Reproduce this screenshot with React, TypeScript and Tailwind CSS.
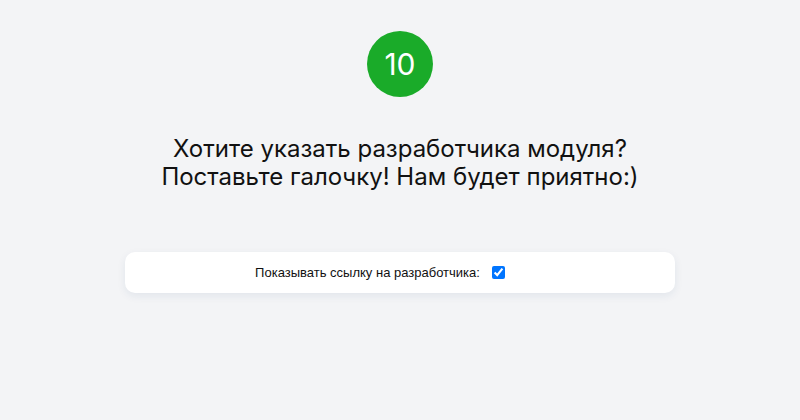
export default function App() {
  return (
    <div className="min-h-[420px] w-full bg-[#f3f4f6] flex flex-col items-center pt-[31px]" style={{ fontFamily: "Inter, sans-serif" }}>
      <div className="w-[66px] h-[66px] rounded-full bg-[#1aab29] flex items-center justify-center text-white text-[30px] leading-none">
        10
      </div>
      <h1 className="mt-[38px] text-center text-[24px] leading-[28px] text-[#111] font-normal">
        Хотите указать разработчика модуля?
        <br />
        Поставьте галочку! Нам будет приятно:)
      </h1>
      <div className="mt-[61px] w-[550px] h-[41px] bg-white rounded-[10px] shadow-[0_3px_8px_rgba(30,60,120,0.08)] flex items-center justify-center gap-[12px] pr-[40px]">
        <span className="text-[13px] text-[#111]" style={{ fontFamily: '"Liberation Sans", Arial, sans-serif' }}>
          Показывать ссылку на разработчика:
        </span>
        <input type="checkbox" defaultChecked className="w-[13px] h-[13px] m-0 accent-[#0075ff]" />
      </div>
    </div>
  );
}
